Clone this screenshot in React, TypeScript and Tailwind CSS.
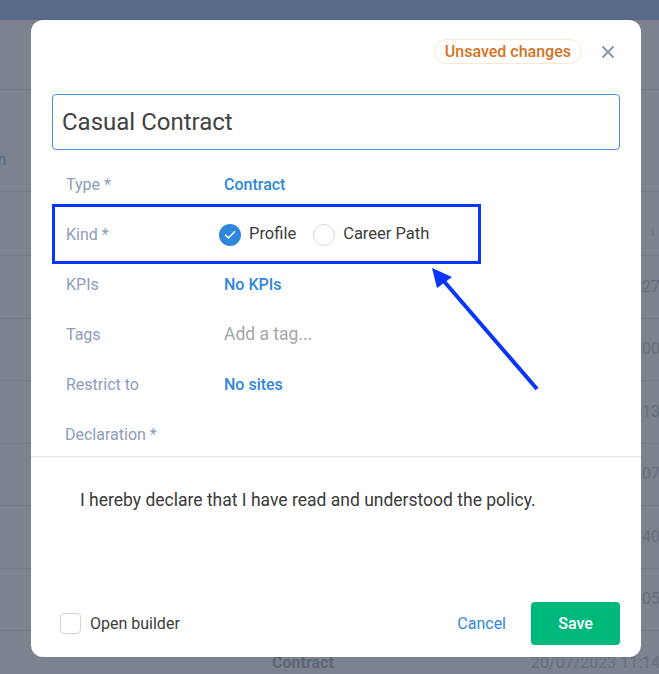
import React from 'react'

const font = { fontFamily: 'Roboto, "Noto Sans", sans-serif' }

// ---- Background list (dimmed behind the modal) ------------------------------
const rows = ['27', '00', '13', '07', '40', '05']

function BackgroundList() {
    return (
        <div className="flex flex-col">
            <div className="h-5 bg-[#576b89]" />
            <div className="h-[70px] border-b border-[#747a86]" />
            <div className="flex h-[102px] items-center border-b border-[#747a86] pt-[38px]">
                <span className="-ml-[3px] text-[17px] font-medium text-[#55709a]">
                    h
                </span>
            </div>
            <div className="flex h-[64px] items-center justify-end border-b border-[#747a86] pr-[3px] pt-[14px]">
                <span className="text-[14px] text-[#6b717d]">↓</span>
            </div>
            {rows.map((m) => (
                <div
                    key={m}
                    className="flex h-[62.5px] items-center justify-end border-b border-[#747a86]">
                    <span className="-mr-[1px] whitespace-nowrap text-[16px] text-[#686e7a]">
                        20/07/2023 11:{m}
                    </span>
                </div>
            ))}
            <div className="flex h-[62px] items-center pt-[2px]">
                <span className="ml-[272px] text-[16px] font-bold text-[#5d6679]">
                    Contract
                </span>
                <span className="ml-auto -mr-[1px] whitespace-nowrap text-[16px] text-[#686e7a]">
                    20/07/2023 11:14
                </span>
            </div>
        </div>
    )
}

// ---- Form row -----------------------------------------------------------------
function Field({ label, children }: { label: string; children?: React.ReactNode }) {
    return (
        <div className="flex h-[50px] items-center pt-[1px]">
            <div className="w-[158px] text-[16px] text-[#8d9dbc]">{label}</div>
            <div className="flex items-center">{children}</div>
        </div>
    )
}

export default function App() {
    return (
        <div
            className="relative h-[674px] w-[659px] overflow-hidden bg-[#7c828e]"
            style={font}>
            <BackgroundList />

            {/* Modal */}
            <div className="absolute top-[20px] left-[31px] flex h-[637px] w-[610px] flex-col rounded-[12px] bg-white">
                {/* Header */}
                <div className="flex items-center justify-end pt-[19px] pr-[27px]">
                    <span className="flex h-[25px] items-center rounded-full border border-[#fde8cf] px-[10px] text-[16px] font-medium text-[#d4731f]">
                        Unsaved changes
                    </span>
                    <button className="ml-[20px] flex h-[12px] w-[12px] items-center justify-center">
                        <svg width="12" height="12" viewBox="0 0 12 12">
                            <path
                                d="M1 1 L11 11 M11 1 L1 11"
                                stroke="#8193ad"
                                strokeWidth="1.8"
                                strokeLinecap="round"
                            />
                        </svg>
                    </button>
                </div>

                {/* Title input */}
                <div className="mx-[21px] mt-[30px] flex h-[56px] items-center rounded-[4px] border border-[#4a90d9] px-[9px]">
                    <span className="text-[24px] text-[#424242]">Casual Contract</span>
                </div>

                {/* Fields */}
                <div className="mt-[9px] flex flex-col pl-[35px]">
                    <Field label="Type *">
                        <span className="text-[16px] font-medium text-[#2f87db]">Contract</span>
                    </Field>
                    <Field label="Kind *">
                        <span className="-ml-[5px] flex h-[22px] w-[22px] items-center justify-center rounded-full bg-[#2f87db]">
                            <svg width="12" height="10" viewBox="0 0 12 10">
                                <path
                                    d="M1.5 5.2 L4.5 8 L10.5 1.8"
                                    stroke="white"
                                    strokeWidth="1.6"
                                    fill="none"
                                    strokeLinecap="round"
                                    strokeLinejoin="round"
                                />
                            </svg>
                        </span>
                        <span className="ml-[8px] text-[16.5px] text-[#3d3d3d]">Profile</span>
                        <span className="ml-[17px] h-[22px] w-[22px] rounded-full border border-[#d6d6d6]" />
                        <span className="ml-[8px] text-[16.5px] text-[#3d3d3d]">Career Path</span>
                    </Field>
                    <Field label="KPIs">
                        <span className="text-[16px] font-medium text-[#2f87db]">No KPIs</span>
                    </Field>
                    <Field label="Tags">
                        <span className="text-[17.5px] text-[#a6a6a6]">Add a tag...</span>
                    </Field>
                    <Field label="Restrict to">
                        <span className="text-[16px] font-medium text-[#2f87db]">No sites</span>
                    </Field>
                    <div className="h-[47px] pt-[14px] text-[16px] leading-6 text-[#8d9dbc]">
                        <span className="-ml-[1px]">Declaration *</span>
                    </div>
                </div>

                {/* Declaration body */}
                <div className="flex-1 border-t border-[#e6e8ee] pt-[31px] pl-[49px] text-[17.5px] leading-6 text-[#3a3a3a]">
                    I hereby declare that I have read and understood the policy.
                </div>

                {/* Footer */}
                <div className="flex items-center pr-[21px] pb-[12px] pl-[29px]">
                    <span className="h-[21px] w-[21px] rounded-[4px] border border-[#d3d3d3]" />
                    <span className="ml-[9px] text-[16px] text-[#3d3d3d]">Open builder</span>
                    <button className="ml-auto text-[16px] text-[#2f87db]">Cancel</button>
                    <button className="ml-[25px] flex h-[43px] w-[89px] items-center justify-center rounded-[4px] bg-[#00b87c] text-[16px] font-medium text-white">
                        Save
                    </button>
                </div>
            </div>

            {/* Annotation: highlight box + arrow */}
            <div className="absolute top-[204px] left-[52px] h-[60px] w-[429px] border-[3px] border-[#0a35fb]" />
            <svg
                className="pointer-events-none absolute top-0 left-0"
                width="659"
                height="674"
                viewBox="0 0 659 674">
                <line x1="537" y1="389" x2="442" y2="279" stroke="#0a35fb" strokeWidth="4" />
                <polygon points="432,268 452,277 437,288" fill="#0a35fb" />
            </svg>
        </div>
    )
}
